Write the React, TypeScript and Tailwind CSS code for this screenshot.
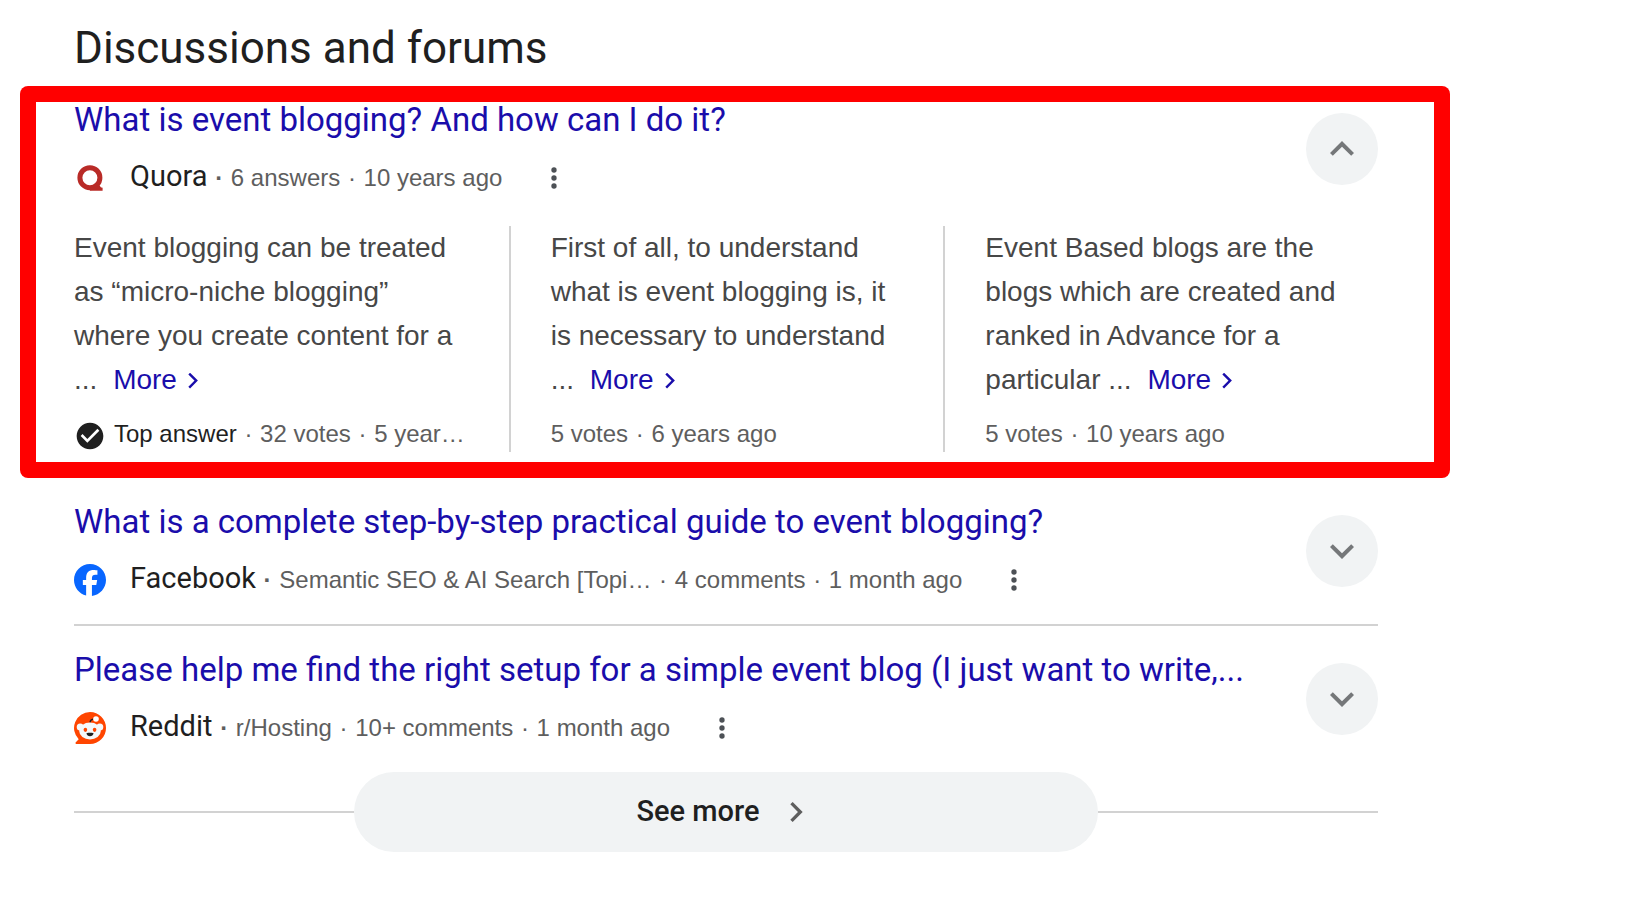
import React from 'react';
import { FaFacebook } from 'react-icons/fa6';

interface Answer {
  lines: string[];
  last: string;
  votes: string;
  age: string;
  top?: boolean;
}

interface Discussion {
  id: string;
  title: string;
  source: string;
  icon: React.ReactNode;
  meta: string[];
  answers?: Answer[];
}

function QuoraLogo() {
  return (
    <svg viewBox="0 0 32 32" className="w-8 h-8" aria-hidden="true">
      <circle cx="15.9" cy="15.7" r="10" fill="none" stroke="#B92B27" strokeWidth="5" />
      <path d="M15.9 25.2h6l2.8-2.8 1.6 2.2c.5.8 1 1.2 2.3 1.2v2.9H15.9z" fill="#B92B27" />
    </svg>
  );
}

function RedditLogo() {
  return (
    <svg viewBox="0 0 32 32" className="w-8 h-8" aria-hidden="true">
      <path d="M16 0a16 16 0 1 1 0 32H2.6c-1 0-1.4-1.1-.8-1.8l2.9-2.9A16 16 0 0 1 16 0z" fill="#FF4500" />
      <circle cx="6.2" cy="15" r="3.5" fill="#F4F8FB" />
      <circle cx="25.8" cy="15" r="3.5" fill="#F4F8FB" />
      <path d="M16 10.6c.1-2 1.2-3.1 3.2-3.4" fill="none" stroke="#1F1F1F" strokeWidth="1.3" />
      <circle cx="22" cy="7" r="2.8" fill="#fff" />
      <ellipse cx="16" cy="19" rx="10.8" ry="8.4" fill="#F4F8FB" />
      <ellipse cx="11.4" cy="17.8" rx="1.8" ry="2.1" fill="#FF4500" />
      <ellipse cx="20.6" cy="17.8" rx="1.8" ry="2.1" fill="#FF4500" />
      <path d="M12.4 21.2c2.3-.5 4.9-.5 7.2 0-.4 2-1.8 3-3.6 3s-3.2-1-3.6-3z" fill="#1F1F1F" />
    </svg>
  );
}

const discussions: Discussion[] = [
  {
    id: 'quora',
    title: 'What is event blogging? And how can I do it?',
    source: 'Quora',
    icon: <QuoraLogo />,
    meta: ['6 answers', '10 years ago'],
    answers: [
      {
        lines: ['Event blogging can be treated', 'as “micro-niche blogging”', 'where you create content for a'],
        last: '...',
        votes: '32 votes',
        age: '5 year…',
        top: true,
      },
      {
        lines: ['First of all, to understand', 'what is event blogging is, it', 'is necessary to understand'],
        last: '...',
        votes: '5 votes',
        age: '6 years ago',
      },
      {
        lines: ['Event Based blogs are the', 'blogs which are created and', 'ranked in Advance for a'],
        last: 'particular ...',
        votes: '5 votes',
        age: '10 years ago',
      },
    ],
  },
  {
    id: 'facebook',
    title: 'What is a complete step-by-step practical guide to event blogging?',
    source: 'Facebook',
    icon: <FaFacebook className="w-8 h-8 text-[#0866FF]" />,
    meta: ['Semantic SEO & AI Search [Topi…', '4 comments', '1 month ago'],
  },
  {
    id: 'reddit',
    title: 'Please help me find the right setup for a simple event blog (I just want to write,...',
    source: 'Reddit',
    icon: <RedditLogo />,
    meta: ['r/Hosting', '10+ comments', '1 month ago'],
  },
];

// Middle dot between two pieces of meta text
function Dot({ bold }: { bold?: boolean }) {
  return <span className={bold ? 'mx-px font-bold' : 'mx-px'}> · </span>;
}

function ToggleButton({ open }: { open: boolean }) {
  return (
    <button
      aria-label={open ? 'Collapse' : 'Expand'}
      aria-expanded={open}
      className="mt-[11px] w-18 h-18 shrink-0 rounded-full bg-[#F1F3F4] flex items-center justify-center cursor-pointer"
    >
      <svg viewBox="0 0 24 24" className="w-12 h-12 fill-[#757779]" aria-hidden="true">
        {open ? (
          <path d="M12 8l-6 6 1.41 1.41L12 10.83l4.59 4.58L18 14z" />
        ) : (
          <path d="M16.59 8.59L12 13.17 7.41 8.59 6 10l6 6 6-6z" />
        )}
      </svg>
    </button>
  );
}

function DiscussionHeader({ item }: { item: Discussion }) {
  return (
    <div className="flex justify-between gap-6">
      <div className="min-w-0">
        <h3 className="font-[Roboto,sans-serif] text-[33px] leading-9 whitespace-nowrap">
          <a href={`#${item.id}`} className="text-[#1A0DAB] hover:underline">{item.title}</a>
        </h3>
        <div className="mt-4 h-12 flex items-center whitespace-nowrap">
          <span className="mr-6 shrink-0">{item.icon}</span>
          <span className="pb-0.5 text-2xl leading-9 text-[#5E5E5E]">
            <span className="font-[Roboto,sans-serif] text-[29px] text-[#1F1F1F]">{item.source}</span>
            {item.meta.map((text, idx) => (
              <React.Fragment key={text}>
                <Dot bold={idx === 0} />
                {text}
              </React.Fragment>
            ))}
          </span>
          <button aria-label="About this result" className="ml-9 shrink-0 cursor-pointer">
            <svg viewBox="0 0 24 24" className="w-8 h-8 fill-[#4D5156]" aria-hidden="true">
              <circle cx="12" cy="6" r="2" />
              <circle cx="12" cy="12" r="2" />
              <circle cx="12" cy="18" r="2" />
            </svg>
          </button>
        </div>
      </div>
      <ToggleButton open={!!item.answers} />
    </div>
  );
}

function AnswerColumn({ answer }: { answer: Answer }) {
  return (
    <div className="border-l-2 border-[#D2D2D2] pl-10 whitespace-nowrap first:border-l-0 first:pl-0">
      <p className="text-[28px] leading-11 text-[#474747]">
        {answer.lines.map(line => (
          <span key={line} className="block">{line}</span>
        ))}
        {answer.last}{' '}
        <a href="#more" className="ml-2 text-[#1A0DAB] hover:underline">
          More
          <svg viewBox="0 0 10 16" className="inline w-[10px] h-4 ml-[11px] align-baseline" aria-hidden="true">
            <path d="M1.2 .6l7 7-7 7" fill="none" stroke="currentColor" strokeWidth="2.4" />
          </svg>
        </a>
      </p>
      <div className="mt-[14px] flex items-center text-2xl leading-9 text-[#5E5E5E]">
        {answer.top && (
          <svg viewBox="0 0 24 24" className="w-8 h-8 mr-2 mt-1 shrink-0 fill-[#1F1F1F]" aria-hidden="true">
            <path d="M12 2C6.48 2 2 6.48 2 12s4.48 10 10 10 10-4.48 10-10S17.52 2 12 2zm-2 15l-5-5 1.41-1.41L10 14.17l7.59-7.59L19 8l-9 9z" />
          </svg>
        )}
        <span>
          {answer.top && <><span className="text-[#1F1F1F]">Top answer</span><Dot /></>}
          {answer.votes}<Dot />{answer.age}
        </span>
      </div>
    </div>
  );
}

export default function App() {
  const [first, ...rest] = discussions;

  return (
    <main className="min-h-screen bg-white pl-5 pr-[200px] pb-12 font-['Liberation_Sans',Arial,sans-serif]">
      <h2 className="px-[54px] pt-5 mb-[10px] font-[Roboto,sans-serif] text-[44px] leading-14 text-[#1F1F1F]">
        Discussions and forums
      </h2>

      {/* Highlighted result */}
      <section className="rounded-lg bg-[#FF0000] p-4">
        <div className="bg-white pl-[38px] pr-14 pb-[10px]">
          <DiscussionHeader item={first} />
          <div className="mt-6 grid grid-cols-3">
            {first.answers?.map(answer => (
              <AnswerColumn key={answer.age} answer={answer} />
            ))}
          </div>
        </div>
      </section>

      <div className="pl-[54px] pr-[72px]">
        {rest.map(item => (
          <article key={item.id} className="pt-[26px] pb-5 border-b-2 border-[#D2D2D2] last-of-type:border-b-0">
            <DiscussionHeader item={item} />
          </article>
        ))}

        <div className="flex items-center">
          <span className="flex-1 h-[2px] bg-[#D2D2D2]" />
          <button className="w-[57%] h-20 rounded-full bg-[#F1F3F4] flex items-center justify-center gap-4 font-[Roboto,sans-serif] font-medium text-[29px] text-[#1F1F1F] cursor-pointer">
            See more
            <svg viewBox="0 0 24 24" className="w-10 h-10 fill-[#5E5E5E]" aria-hidden="true">
              <path d="M10 6L8.59 7.41 13.17 12l-4.58 4.59L10 18l6-6z" />
            </svg>
          </button>
          <span className="flex-1 h-[2px] bg-[#D2D2D2]" />
        </div>
      </div>
    </main>
  );
}
